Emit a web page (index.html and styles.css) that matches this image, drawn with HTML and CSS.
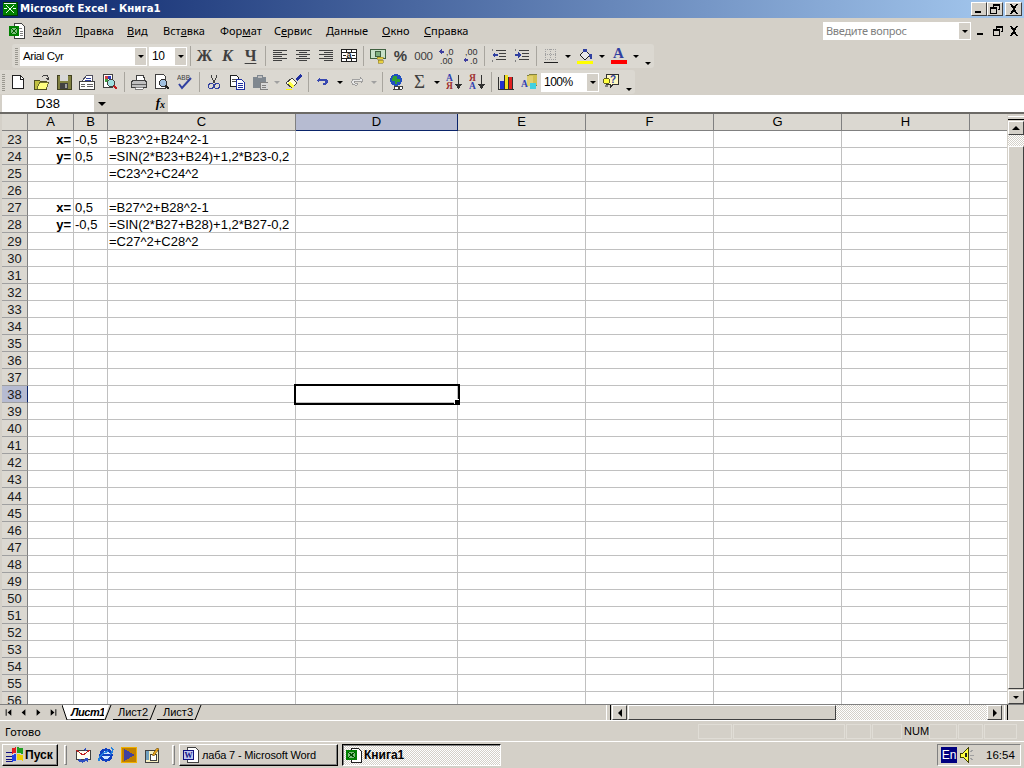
FILE: index.html
```html
<!DOCTYPE html>
<html lang="ru">
<head>
<meta charset="utf-8">
<title>Microsoft Excel - Книга1</title>
<link rel="stylesheet" href="styles.css">
</head>
<body>
<div class="app">
  <header class="titlebar">
    <svg class="i app-icon" viewBox="0 0 16 16"><rect x="0" y="0" width="16" height="15" fill="#004000"/><rect x="1" y="1" width="14" height="13" fill="#008000"/><path d="M3 3l9 9M12 3l-9 9M2 2h12M2 7h3M11 7h3" stroke="#fff" fill="none"/></svg>
    <span class="title-text">Microsoft Excel - Книга1</span>
    <div class="win-btns">
      <button class="wb"><svg class="g" viewBox="0 0 14 12"><rect x="3" y="8" width="6" height="2"/></svg></button>
      <button class="wb"><svg class="g" viewBox="0 0 14 12"><path d="M5 1h7v6h-2v-1h1v-3h-5v1h-1zM2 4h7v7h-7zM3 6v4h5v-4z" fill-rule="evenodd"/></svg></button>
      <button class="wb wb-close"><svg class="g" viewBox="0 0 14 12"><path d="M3 1h2l2 3 2-3h2l-3 5 3 5h-2l-2-3-2 3h-2l3-5z"/></svg></button>
    </div>
  </header>

  <nav class="menubar">
    <svg class="i menu-doc" viewBox="0 0 17 17"><path d="M6.500.5h7l3 3v12h-10z" fill="#fff" stroke="#404040"/><path d="M8.500 15.500h5" stroke="#404040"/><path d="M10 5h4M12 8h3M12 10h3M12 12h3" stroke="#808080"/><rect x="1" y="3" width="10" height="10" fill="#008000"/><rect x="3" y="5" width="6" height="6" fill="#80c080"/><path d="M3 5l6 6M9 5l-6 6" stroke="#006000"/></svg>
    <ul class="menu-list">
      <li><u>Ф</u>айл</li><li><u>П</u>равка</li><li><u>В</u>ид</li><li>Вст<u>а</u>вка</li><li>Фор<u>м</u>ат</li><li>С<u>е</u>рвис</li><li><u>Д</u>анные</li><li><u>О</u>кно</li><li><u>С</u>правка</li>
    </ul>
    <div class="ask">
      <span class="ask-input">Введите вопрос</span>
      <span class="drop"><b class="tri"></b></span>
    </div>
    <div class="doc-btns">
      <svg class="g" viewBox="0 0 14 12"><rect x="3" y="8" width="6" height="2"/></svg>
      <svg class="g" viewBox="0 0 14 12"><path d="M5 1h7v6h-2v-1h1v-3h-5v1h-1zM2 4h7v7h-7zM3 6v4h5v-4z" fill-rule="evenodd"/></svg>
      <svg class="g" viewBox="0 0 14 12"><path d="M3 1h2l2 3 2-3h2l-3 5 3 5h-2l-2-3-2 3h-2l3-5z"/></svg>
    </div>
  </nav>

  <div class="band band-format">
    <span class="grip"></span>
    <div class="combo combo-font"><span class="combo-text">Arial Cyr</span><span class="drop"><b class="tri"></b></span></div>
    <div class="combo combo-size"><span class="combo-text">10</span><span class="drop"><b class="tri"></b></span></div>
    <span class="sep"></span>
    <span class="tb tb-letter">Ж</span>
    <span class="tb tb-letter tb-italic">К</span>
    <span class="tb tb-letter tb-under">Ч</span>
    <span class="sep"></span>
    <span class="tb"><svg class="i" viewBox="0 0 16 16"><path d="M1 2.500h14M1 4.500h9M1 6.500h14M1 8.500h9M1 10.500h14M1 12.500h9" stroke="#404040"/></svg></span>
    <span class="tb"><svg class="i" viewBox="0 0 16 16"><path d="M1 2.500h14M4 4.500h8M1 6.500h14M4 8.500h8M1 10.500h14M4 12.500h8" stroke="#404040"/></svg></span>
    <span class="tb"><svg class="i" viewBox="0 0 16 16"><path d="M1 2.500h14M6 4.500h9M1 6.500h14M6 8.500h9M1 10.500h14M6 12.500h9" stroke="#404040"/></svg></span>
    <span class="tb"><svg class="i" viewBox="0 0 16 16"><rect x=".5" y="1.500" width="15" height="12" fill="#fff" stroke="#202020"/><path d="M1 4.500h14M1 10.500h14M5.500 2v2M10.500 2v2M5.500 11v2M10.500 11v2M2 7.500h3M11 7.500h3" stroke="#202020"/><text x="8" y="10" class="svg-mini">a</text></svg></span>
    <span class="sep"></span>
    <span class="tb"><svg class="i" viewBox="0 0 16 16"><rect x=".5" y="1.500" width="15" height="9" fill="#c8e0c8" stroke="#406040"/><circle cx="8" cy="6" r="3" fill="#80b080" stroke="#406040"/><path d="M7 9h6v2h-6zM8 12h5v3h-5z" fill="#e8d040" stroke="#807020" stroke-width=".5"/></svg></span>
    <span class="tb tb-text">%</span>
    <span class="tb tb-text tb-thin">000</span>
    <span class="tb"><svg class="i i-wide" viewBox="0 0 18 16"><path d="M4 1l-3 2.500 3 2.500zM4 2.500h2v2h-2z" fill="#4040a0"/><text x="8" y="7" class="svg-num">,0</text><text x="2" y="16" class="svg-num">,00</text></svg></span>
    <span class="tb"><svg class="i i-wide" viewBox="0 0 18 16"><text x="4" y="7" class="svg-num">,00</text><path d="M5 9.500l-3 2.500 3 2.500zM5 11h2v2h-2z" fill="#4040a0"/><text x="9" y="16" class="svg-num">,0</text></svg></span>
    <span class="sep"></span>
    <span class="tb"><svg class="i" viewBox="0 0 16 16"><path d="M5 2.500h10M8 5.500h7M8 8.500h7M5 11.500h10" stroke="#404040"/><path d="M1 7l3-3v2h3v2h-3v2z" fill="#3040a0"/><path d="M1 1v2M1 12v2" stroke="#808080"/></svg></span>
    <span class="tb"><svg class="i" viewBox="0 0 16 16"><path d="M5 2.500h10M8 5.500h7M8 8.500h7M5 11.500h10" stroke="#404040"/><path d="M7 7l-3-3v2h-3v2h3v2z" fill="#3040a0"/><path d="M1 1v2M1 12v2" stroke="#808080"/></svg></span>
    <span class="sep"></span>
    <span class="tb"><svg class="i" viewBox="0 0 16 16"><path d="M2.500 1v10M7.500 1v10M12.500 1v10M2 1.500h11M2 6.500h11M2 11.500h11" stroke="#a0a0a0" stroke-dasharray="1 1"/><path d="M1 14.500h14" stroke="#202020"/></svg></span>
    <span class="arr"><b class="tri"></b></span>
    <span class="tb"><svg class="i" viewBox="0 0 16 16"><path d="M3 7l5-5 5 5-5 5z" fill="#e8e8e8" stroke="#202020"/><path d="M6 1h4v3h-4z" fill="#3040a0"/><path d="M12 6h3v5h-2z" fill="#3040a0"/><rect x="0" y="13" width="16" height="3" fill="#ffff00"/></svg></span>
    <span class="arr"><b class="tri"></b></span>
    <span class="tb tb-fontcolor"><span class="fc-a">A</span><span class="fc-bar"></span></span>
    <span class="arr"><b class="tri"></b></span>
    <span class="more"><i class="more-line"></i><b class="tri"></b></span>
  </div>

  <div class="band band-std">
    <span class="grip grip-first"></span>
    <span class="tb"><svg class="i" viewBox="0 0 16 16"><path d="M2.500 1.500h8l3 3v10h-11z" fill="#fff" stroke="#202020"/><path d="M10.500 2v3h3" fill="none" stroke="#202020"/></svg></span>
    <span class="tb"><svg class="i" viewBox="0 0 16 16"><path d="M1 6h5l1 1h6v8h-12z" fill="#c0c040" stroke="#505020"/><path d="M4 14l3-6h9l-3 7h-9z" fill="#ffff80" stroke="#505020" stroke-width=".8"/><path d="M9 3l2-2h3l1 2v2M13 4h3l-1 2z" fill="none" stroke="#404040"/></svg></span>
    <span class="tb"><svg class="i" viewBox="0 0 16 16"><rect x="1" y="1" width="14" height="14" fill="#808040" stroke="#404020"/><rect x="4" y="1" width="8" height="6" fill="#d8d8d8"/><rect x="4" y="9" width="8" height="6" fill="#404040"/><rect x="9" y="10" width="2" height="4" fill="#a0a0a0"/></svg></span>
    <span class="tb"><svg class="i" viewBox="0 0 16 16"><path d="M3 7l5-6h5v6z" fill="#fff" stroke="#505060"/><path d="M7 4h5M6 6h6" stroke="#3040a0"/><rect x=".5" y="7.500" width="15" height="8" fill="#fff" stroke="#404040"/><path d="M2 10.500h4M2 12.500h4M8 10.500h6M8 12.500h6" stroke="#606060"/></svg></span>
    <span class="tb"><svg class="i" viewBox="0 0 16 16"><path d="M1.500 .5h9v13h-9z" fill="#fff" stroke="#404040"/><path d="M3 2h3v3h-3z" fill="#d04040"/><path d="M6 2h3v3h-3z" fill="#3040c0"/><path d="M3 5h3v3h-3z" fill="#40a040"/><circle cx="9" cy="9" r="3.500" fill="#a0e0e0" stroke="#404040"/><path d="M12 12l3 3" stroke="#c02020" stroke-width="2"/></svg></span>
    <span class="sep"></span>
    <span class="tb"><svg class="i" viewBox="0 0 16 16"><path d="M5 1h7l2 5h-9z" fill="#fff" stroke="#404040"/><path d="M1.500 6.500h13l1 2v5h-15v-5z" fill="#c0c0c0" stroke="#404040"/><path d="M1 10.500h14" stroke="#606060"/><path d="M4 13h8v2h-8z" fill="#fff" stroke="#404040" stroke-width=".6"/></svg></span>
    <span class="tb"><svg class="i" viewBox="0 0 16 16"><path d="M1.500 .5h8l2 2v12h-10z" fill="#fff" stroke="#404040"/><circle cx="9" cy="9" r="3.500" fill="#a0c0e0" stroke="#303030"/><path d="M12 12l3 3" stroke="#202020" stroke-width="2"/></svg></span>
    <span class="tb"><svg class="i" viewBox="0 0 16 16"><text x="0" y="6" class="svg-abv">ABB</text><path d="M2 10l3 4 9-10" fill="none" stroke="#3040a0" stroke-width="2" shape-rendering="auto"/></svg></span>
    <span class="sep"></span>
    <span class="tb"><svg class="i" viewBox="0 0 16 16"><path d="M5 1l3 8M11 1l-3 8" stroke="#404040" fill="none"/><circle cx="5" cy="12" r="2.500" fill="none" stroke="#3040a0"/><circle cx="11" cy="12" r="2.500" fill="none" stroke="#3040a0"/></svg></span>
    <span class="tb"><svg class="i" viewBox="0 0 16 16"><path d="M1.500 1.500h6l2 2v9h-8z" fill="#fff" stroke="#202020"/><path d="M3 5h4M3 7h4" stroke="#505050"/><path d="M7.500 5.500h5l3 3v7h-8z" fill="#fff" stroke="#2030a0"/><path d="M9 9h5M9 11h5M9 13h5" stroke="#2030a0"/></svg></span>
    <span class="tb"><svg class="i" viewBox="0 0 16 16"><path d="M5 1h6v2h3v11h-13v-11h4z" fill="#808890"/><path d="M6 2h4v2h-4z" fill="#c0c0c0"/><rect x="8" y="8" width="8" height="7" fill="#d8d8d8" stroke="#808080"/><path d="M10 11h4M10 13h4" stroke="#808080"/></svg></span>
    <span class="arr arr-off"><b class="tri"></b></span>
    <span class="tb"><svg class="i" viewBox="0 0 16 16"><path d="M0 9l6-5 5 5-5 5z" fill="#fffde0" stroke="#404040"/><path d="M2 9l4 5 2-2-4-5z" fill="#ffff40"/><path d="M9 5l5-5 2 2-5 5z" fill="#2030a0"/><path d="M0 15.500h6" stroke="#ffff00" stroke-width="1"/></svg></span>
    <span class="sep"></span>
    <span class="tb"><svg class="i" viewBox="0 0 16 16"><path d="M2 6l3-3v2h6c3 0 3 6-1 6h-2v-2h2c1 0 1-2 0-2h-6v2z" fill="#3848b0"/></svg></span>
    <span class="arr"><b class="tri"></b></span>
    <span class="tb"><svg class="i" viewBox="0 0 16 16"><path d="M14 6l-3-3v2h-6c-3 0-3 6 1 6h2v-2h-2c-1 0-1-2 0-2h6v2z" fill="#e8e8e8" stroke="#909090" stroke-width=".8"/></svg></span>
    <span class="arr arr-off"><b class="tri"></b></span>
    <span class="sep"></span>
    <span class="tb"><svg class="i" viewBox="0 0 16 16"><circle cx="7" cy="6" r="6" fill="#2050c0"/><path d="M4 2h4v3h3v3h-3v2h-2v-3h-3z" fill="#30a030"/><path d="M5 12a2 2 0 0 1 0 3h5a2 2 0 0 1 0-3zM10 12a2 2 0 0 1 0 3h3a2 2 0 0 0 0-3z" fill="#fff" stroke="#404040"/></svg></span>
    <span class="tb tb-sigma">Σ</span>
    <span class="arr"><b class="tri"></b></span>
    <span class="tb"><svg class="i" viewBox="0 0 16 16"><text x="0" y="7" class="svg-sort blue">A</text><text x="0" y="15" class="svg-sort red">Я</text><path d="M12 1v10" stroke="#303030"/><path d="M9 10h7l-3.500 5z" fill="#303030"/></svg></span>
    <span class="tb"><svg class="i" viewBox="0 0 16 16"><text x="0" y="7" class="svg-sort red">Я</text><text x="0" y="15" class="svg-sort blue">A</text><path d="M12 1v10" stroke="#303030"/><path d="M9 10h7l-3.500 5z" fill="#303030"/></svg></span>
    <span class="sep"></span>
    <span class="tb"><svg class="i" viewBox="0 0 16 16"><path d="M0 15.500h16M.5 3v13" stroke="#303030"/><rect x="2" y="7" width="4" height="8" fill="#2030d0"/><rect x="6" y="1" width="4" height="14" fill="#f0e020"/><rect x="10" y="3" width="4" height="12" fill="#e02020"/><path d="M6 1v14M10 3v12M14 3v12" stroke="#303030"/></svg></span>
    <span class="tb"><svg class="i" viewBox="0 0 16 16"><path d="M6 2l4-2h6v11l-4 2z" fill="#d0c050" stroke="#808040"/><path d="M6 2h6v10h-6z" fill="#e0d070"/><text x="0" y="13" class="svg-sort blue">A</text><circle cx="12" cy="12" r="3.500" fill="#40d0e0"/></svg></span>
    <div class="combo combo-zoom"><span class="combo-text">100%</span><span class="drop"><b class="tri"></b></span></div>
    <span class="tb"><svg class="i" viewBox="0 0 16 16"><path d="M3 .5h12v10h-5l-3 3v-3h-4z" fill="#fff8c0" stroke="#303030"/><text x="7" y="9" class="svg-help">?</text><circle cx="3.500" cy="7" r="3" fill="#ffff40" stroke="#606020"/><path d="M2 11h3v2h-3z" fill="#808080"/></svg></span>
    <span class="more"><i class="more-line"></i><b class="tri"></b></span>
  </div>

  <div class="formula">
    <div class="namebox">D38</div>
    <span class="name-arrow"><b class="tri"></b></span>
    <span class="fx">f<sub>x</sub></span>
    <div class="formula-input"></div>
  </div>

  <main class="sheet-area">
    <div class="grid-clip">
      <table class="grid">
        <colgroup><col class="c-h"><col class="c-a"><col class="c-b"><col class="c-c"><col class="c-d"><col class="c-x"><col class="c-x"><col class="c-x"><col class="c-x"><col class="c-x"></colgroup>
        <thead><tr><th></th><th>A</th><th>B</th><th>C</th><th class="sel">D</th><th>E</th><th>F</th><th>G</th><th>H</th><th></th></tr></thead>
        <tbody>
          <tr><th>23</th><td class="lbl">x=</td><td>-0,5</td><td>=B23^2+B24^2-1</td><td></td><td></td><td></td><td></td><td></td><td></td></tr>
          <tr><th>24</th><td class="lbl">y=</td><td>0,5</td><td>=SIN(2*B23+B24)+1,2*B23-0,2</td><td></td><td></td><td></td><td></td><td></td><td></td></tr>
          <tr><th>25</th><td></td><td></td><td>=C23^2+C24^2</td><td></td><td></td><td></td><td></td><td></td><td></td></tr>
          <tr><th>26</th><td></td><td></td><td></td><td></td><td></td><td></td><td></td><td></td><td></td></tr>
          <tr><th>27</th><td class="lbl">x=</td><td>0,5</td><td>=B27^2+B28^2-1</td><td></td><td></td><td></td><td></td><td></td><td></td></tr>
          <tr><th>28</th><td class="lbl">y=</td><td>-0,5</td><td>=SIN(2*B27+B28)+1,2*B27-0,2</td><td></td><td></td><td></td><td></td><td></td><td></td></tr>
          <tr><th>29</th><td></td><td></td><td>=C27^2+C28^2</td><td></td><td></td><td></td><td></td><td></td><td></td></tr>
          <tr><th>30</th><td></td><td></td><td></td><td></td><td></td><td></td><td></td><td></td><td></td></tr>
          <tr><th>31</th><td></td><td></td><td></td><td></td><td></td><td></td><td></td><td></td><td></td></tr>
          <tr><th>32</th><td></td><td></td><td></td><td></td><td></td><td></td><td></td><td></td><td></td></tr>
          <tr><th>33</th><td></td><td></td><td></td><td></td><td></td><td></td><td></td><td></td><td></td></tr>
          <tr><th>34</th><td></td><td></td><td></td><td></td><td></td><td></td><td></td><td></td><td></td></tr>
          <tr><th>35</th><td></td><td></td><td></td><td></td><td></td><td></td><td></td><td></td><td></td></tr>
          <tr><th>36</th><td></td><td></td><td></td><td></td><td></td><td></td><td></td><td></td><td></td></tr>
          <tr><th>37</th><td></td><td></td><td></td><td></td><td></td><td></td><td></td><td></td><td></td></tr>
          <tr><th class="sel">38</th><td></td><td></td><td></td><td class="active"></td><td></td><td></td><td></td><td></td><td></td></tr>
          <tr><th>39</th><td></td><td></td><td></td><td></td><td></td><td></td><td></td><td></td><td></td></tr>
          <tr><th>40</th><td></td><td></td><td></td><td></td><td></td><td></td><td></td><td></td><td></td></tr>
          <tr><th>41</th><td></td><td></td><td></td><td></td><td></td><td></td><td></td><td></td><td></td></tr>
          <tr><th>42</th><td></td><td></td><td></td><td></td><td></td><td></td><td></td><td></td><td></td></tr>
          <tr><th>43</th><td></td><td></td><td></td><td></td><td></td><td></td><td></td><td></td><td></td></tr>
          <tr><th>44</th><td></td><td></td><td></td><td></td><td></td><td></td><td></td><td></td><td></td></tr>
          <tr><th>45</th><td></td><td></td><td></td><td></td><td></td><td></td><td></td><td></td><td></td></tr>
          <tr><th>46</th><td></td><td></td><td></td><td></td><td></td><td></td><td></td><td></td><td></td></tr>
          <tr><th>47</th><td></td><td></td><td></td><td></td><td></td><td></td><td></td><td></td><td></td></tr>
          <tr><th>48</th><td></td><td></td><td></td><td></td><td></td><td></td><td></td><td></td><td></td></tr>
          <tr><th>49</th><td></td><td></td><td></td><td></td><td></td><td></td><td></td><td></td><td></td></tr>
          <tr><th>50</th><td></td><td></td><td></td><td></td><td></td><td></td><td></td><td></td><td></td></tr>
          <tr><th>51</th><td></td><td></td><td></td><td></td><td></td><td></td><td></td><td></td><td></td></tr>
          <tr><th>52</th><td></td><td></td><td></td><td></td><td></td><td></td><td></td><td></td><td></td></tr>
          <tr><th>53</th><td></td><td></td><td></td><td></td><td></td><td></td><td></td><td></td><td></td></tr>
          <tr><th>54</th><td></td><td></td><td></td><td></td><td></td><td></td><td></td><td></td><td></td></tr>
          <tr><th>55</th><td></td><td></td><td></td><td></td><td></td><td></td><td></td><td></td><td></td></tr>
          <tr><th>56</th><td></td><td></td><td></td><td></td><td></td><td></td><td></td><td></td><td></td></tr>
        </tbody>
      </table>
    </div>
    <aside class="vscroll">
      <span class="vs-stub"></span>
      <span class="sb-btn"><b class="tri tri-up"></b></span>
      <span class="vs-track"></span>
      <span class="vs-thumb"></span>
      <span class="sb-btn sb-down"><b class="tri"></b></span>
    </aside>
  </main>

  <div class="tabs-row">
    <div class="tab-nav">
      <svg class="nav" viewBox="0 0 16 15"><path d="M5 4h1v7h-1zM11 4v7l-4-3.500z"/></svg>
      <svg class="nav" viewBox="0 0 16 15"><path d="M10 4v7l-4-3.500z"/></svg>
      <svg class="nav" viewBox="0 0 16 15"><path d="M6 4v7l4-3.500z"/></svg>
      <svg class="nav" viewBox="0 0 16 15"><path d="M5 4v7l4-3.500zM10 4h1v7h-1z"/></svg>
    </div>
    <div class="tabs">
      <svg class="slant" viewBox="0 0 9 15"><polygon points="0,0 9,0 9,15 5,15" fill="#fff"/><path d="M0 0l5 15h4" fill="none" stroke="#000" shape-rendering="auto"/></svg>
      <span class="tab tab-active">Лист1</span>
      <svg class="slant" viewBox="0 0 9 15"><polygon points="0,0 5,0 0,15" fill="#fff"/><path d="M0 15h1l6-15" fill="none" stroke="#000" shape-rendering="auto"/></svg>
      <span class="tab">Лист2</span>
      <svg class="slant" viewBox="0 0 9 15"><path d="M0 15h2l6-15" fill="none" stroke="#000" shape-rendering="auto"/></svg>
      <span class="tab tab-3">Лист3</span>
      <svg class="slant" viewBox="0 0 9 15"><path d="M0 15h2l6-15" fill="none" stroke="#000" shape-rendering="auto"/></svg>
    </div>
    <div class="hscroll">
      <span class="hs-split"></span>
      <span class="sb-btn sb-h"><b class="tri tri-left"></b></span>
      <span class="hs-thumb"></span>
      <span class="hs-track"></span>
      <span class="sb-btn sb-h"><b class="tri tri-right"></b></span>
      <span class="hs-split hs-split-r"></span>
    </div>
  </div>

  <footer class="status">
    <span class="status-text">Готово</span>
    <div class="panels">
      <span class="panel p34"></span><span class="panel p112"></span><span class="panel p25"></span><span class="panel p30"></span><span class="panel p25">NUM</span><span class="panel p28"></span><span class="panel p25"></span><span class="panel p33"></span>
    </div>
  </footer>

  <div class="taskbar">
    <button class="start"><svg class="i i-start" viewBox="0 0 16 16"><path d="M0 6h6M0 9h6M0 12h6M0 14h5" stroke="#101080" stroke-width="1"/><path d="M5 2l4-1v5l-4 1z" fill="#e02020"/><path d="M10 1l5 1v5l-5-1z" fill="#20a020"/><path d="M5 8l4-1v6l-4 1z" fill="#2040e0"/><path d="M10 7l5 1v5l-5-1z" fill="#f0d000"/></svg><span>Пуск</span></button>
    <span class="tgrip"></span>
    <div class="quick">
      <svg class="i" viewBox="0 0 16 16"><path d="M1 3h14v9h-14z" fill="#fffff0" stroke="#404040"/><path d="M1 3l7 5 7-5" fill="none" stroke="#c02020"/><path d="M3 13a5 5 0 0 0 8 1l2 1v-4h-4l1 1a3 3 0 0 1-5-1z" fill="#3050c0"/><path d="M11 1l-3 1 3 2z" fill="#3050c0"/></svg>
      <svg class="i" viewBox="0 0 16 16"><circle cx="8" cy="8" r="5.500" fill="#d0e8ff" stroke="#1040c0" stroke-width="2.500"/><path d="M4 8h8" stroke="#1040c0" stroke-width="2"/><path d="M13 1c3 0 2 4-1 7M1 14c-1-3 3-8 9-10" fill="none" stroke="#2080e0" stroke-width="1.500"/></svg>
      <svg class="i" viewBox="0 0 16 16"><rect width="16" height="16" fill="#f0b000"/><rect x="1" y="1" width="14" height="14" fill="#c08000"/><path d="M3 2l11 6-11 6z" fill="#4040a0"/></svg>
      <svg class="i" viewBox="0 0 16 16"><rect x="1" y="3" width="13" height="12" fill="#f8f0c0" stroke="#404040"/><rect x="6" y="7" width="6" height="6" fill="#fff" stroke="#404040"/><path d="M8 8l5-7 2 1-5 7z" fill="#e0a020" stroke="#604000" stroke-width=".5"/><path d="M2 4h3v9h-3z" fill="#70a0c0"/></svg>
    </div>
    <span class="tgrip"></span>
    <button class="task"><svg class="i" viewBox="0 0 16 16"><path d="M4.500 .5h8l3 3v12h-11z" fill="#fff" stroke="#404040"/><rect x="0" y="3" width="11" height="10" fill="#101080"/><rect x="1" y="4" width="9" height="8" fill="#c0c8f0"/><text x="5.500" y="11" class="svg-w">W</text></svg><span>лаба 7 - Microsoft Word</span></button>
    <button class="task task-active"><svg class="i" viewBox="0 0 16 16"><path d="M5.500 1.500h7l3 3v11h-10z" fill="#fff" stroke="#202020"/><rect x="0" y="3" width="11" height="10" fill="#008000"/><rect x="2" y="5" width="7" height="6" fill="#80c080"/><path d="M2 5l7 6M9 5l-7 6" stroke="#005000"/></svg><span>Книга1</span></button>
    <div class="tray">
      <span class="lang">En</span>
      <svg class="i speaker" viewBox="0 0 16 16"><path d="M1 6h3l5-5v14l-5-5h-3z" fill="#ffff40" stroke="#404000"/><path d="M6 6h2v4h-2z" fill="#202020"/><path d="M11 5l3-2M11 8h4M11 11l3 2" stroke="#a0a0a0"/></svg>
      <span class="clock">16:54</span>
    </div>
  </div>
</div>
</body>
</html>
```

FILE: styles.css
```css
* { box-sizing: border-box; }
html, body { margin: 0; padding: 0; }
body { width: 1024px; height: 768px; overflow: hidden; background: #d4d0c8; font-family: "Noto Sans", "Liberation Sans", sans-serif; font-size: 11px; color: #000; }
.app { width: 1024px; height: 768px; display: flex; flex-direction: column; }
button { font: inherit; color: inherit; padding: 0; margin: 0; }
ul { list-style: none; margin: 0; padding: 0; }
.i { width: 16px; height: 16px; display: block; flex: none; shape-rendering: crispEdges; }
.i-wide { width: 18px; }
.i-start { width: 18px; height: 18px; }
.g { width: 14px; height: 12px; display: block; fill: #000; shape-rendering: crispEdges; }
.tri { display: block; width: 0; height: 0; border-style: solid; border-width: 3px 3.500px 0; border-color: #000 transparent transparent; }
.tri-up { border-width: 0 4px 4px; border-color: transparent transparent #000; }
.tri-left { border-width: 4px 4px 4px 0; border-color: transparent #000 transparent transparent; }
.tri-right { border-width: 4px 0 4px 4px; border-color: transparent transparent transparent #000; }

/* title */
.titlebar { height: 18px; flex: none; display: flex; align-items: center; background: linear-gradient(90deg, #0a246a, #a6caf0); color: #fff; padding: 0 2px 0 2px; }
.app-icon { width: 16px; height: 15px; }
.title-text { margin-left: 2px; font: bold 10.200px/18px "DejaVu Sans", sans-serif; }
.win-btns { margin-left: auto; display: flex; }
.wb { width: 16px; height: 14px; background: #d4d0c8; border: 1px solid; border-color: #fff #404040 #404040 #fff; display: flex; align-items: center; justify-content: center; }
.wb-close { margin-left: 2px; width: 17px; }

/* menu */
.menubar { height: 26px; flex: none; display: flex; align-items: center; padding-left: 8px; }
.menu-doc { width: 17px; height: 17px; margin-right: 8px; }
.menu-list { display: grid; grid-template-columns: 42px 52px 36px 57px 54px 52px 56px 42px 50px; line-height: 18px; }
.ask { margin-left: auto; width: 148px; height: 18px; display: flex; background: #fff; border: 1px solid #fff; }
.ask-input { flex: 1; color: #808080; font-size: 11px; letter-spacing: -.3px; line-height: 15px; padding-left: 2px; }
.drop { width: 11px; background: #d4d0c8; display: flex; align-items: center; justify-content: center; flex: none; }
.doc-btns { width: 53px; display: flex; justify-content: space-between; padding: 0 3px 0 3px; }

/* toolbars */
.band { height: 24px; flex: none; display: flex; align-items: center; background: #dbd8d1; border-radius: 3px; }
.band-format { width: 642px; margin-left: 12px; }
.band-std { width: 635px; margin-top: 2px; border-radius: 0 3px 3px 0; }
.grip { width: 8px; height: 17px; flex: none; background: repeating-linear-gradient(180deg, #9a9890 0 1px, transparent 1px 2px) 3px 0 / 3px 100% no-repeat; }
.grip-first { width: 6px; background-position: 2px 0; }
.combo { height: 19px; display: flex; background: #fff; border: 1px solid #fff; flex: none; }
.combo-font { width: 127px; }
.combo-size { width: 38px; margin-left: 2px; }
.combo-zoom { width: 58px; margin-left: 1px; }
.combo-text { flex: 1; font: 12px/17px "Liberation Sans", sans-serif; letter-spacing: -.5px; padding-left: 2px; overflow: hidden; white-space: nowrap; }
.combo-font .combo-text { font-size: 11.500px; letter-spacing: -.4px; }
.sep { width: 6px; height: 20px; flex: none; background: linear-gradient(#a8a59e, #a8a59e) center / 1px 100% no-repeat; }
.tb { width: 23px; height: 22px; flex: none; display: flex; align-items: center; justify-content: center; }
.tb-letter { font: bold 16px/22px "Liberation Serif", serif; color: #404040; }
.tb-italic { font-style: italic; }
.tb-under { text-decoration: underline; text-underline-offset: 2px; }
.tb-text { font: bold 15px/22px "Liberation Sans", sans-serif; color: #404040; }
.tb-thin { font: 11.500px/22px "Liberation Sans", sans-serif; letter-spacing: -.2px; }
.tb-sigma { font: 19px/22px "Liberation Serif", serif; color: #404040; }
.tb-fontcolor { flex-direction: column; justify-content: flex-end; padding-bottom: 3px; }
.fc-a { font: bold 15px/13px "Liberation Serif", serif; color: #3040a0; }
.fc-bar { width: 16px; height: 4px; background: #ff0000; }
.arr { width: 11px; flex: none; display: flex; justify-content: center; }
.arr-off .tri { border-top-color: #a0a0a0; }
.more { width: 13px; height: 20px; flex: none; display: flex; flex-direction: column; align-items: center; justify-content: flex-end; padding-bottom: 1px; gap: 1px; }
.more-line { display: none; }
.svg-mini { font: bold 9px "Liberation Sans", sans-serif; text-anchor: middle; fill: #202020; }
.svg-num { font: 9px "Liberation Sans", sans-serif; fill: #303030; }
.svg-abv { font: 6.500px "Liberation Sans", sans-serif; fill: #404040; }
.svg-sort { font: bold 9.500px "Liberation Serif", serif; }
.blue { fill: #3040b0; }
.red { fill: #a03030; }
.svg-help { font: bold 10px "Liberation Sans", sans-serif; fill: #3040a0; }
.svg-w { font: bold 8px "Liberation Serif", serif; text-anchor: middle; fill: #101080; }

/* formula */
.formula { height: 17px; flex: none; margin-top: 1px; display: flex; align-items: stretch; padding-left: 2px; }
.namebox { width: 92px; background: #fff; text-align: center; font: 13px/17px "Liberation Sans", sans-serif; }
.name-arrow { width: 16px; display: flex; align-items: center; justify-content: center; }
.name-arrow .tri { border-width: 4px 4px 0; }
.fx { width: 58px; text-align: right; padding-right: 3px; font: italic bold 13px/16px "Liberation Serif", serif; }
.fx sub { font-size: 10px; vertical-align: -1px; line-height: 0; }
.formula-input { flex: 1; background: #fff; }

/* sheet */
.sheet-area { height: 592px; flex: none; display: flex; border-top: 2px solid #6c6a66; }
.grid-clip { width: 1007px; height: 590px; overflow: hidden; padding-left: 2px; background: #fff; box-shadow: inset 2px 0 0 #d4d0c8, inset 1px 0 0 #6c6a66; }
.grid { table-layout: fixed; width: 1094px; border-collapse: separate; border-spacing: 0; font: 13px "Liberation Sans", sans-serif; }
.grid tr { height: 17px; }
.grid th, .grid td { height: 17px; padding: 0; border-right: 1px solid #c0c0c0; border-bottom: 1px solid #c0c0c0; line-height: 16px; white-space: nowrap; overflow: hidden; }
.grid tbody th, .grid tbody td { padding-top: 1px; line-height: 15px; vertical-align: top; }
.grid th { background: #dbd8d1; font-weight: normal; text-align: center; color: #000; border-right: 1px solid #808080; border-bottom: 1px solid #bdbab4; }
.grid tbody th { border-bottom-color: #a0a0a0; color: #1a1a1a; }
.grid thead th { border-bottom: 1px solid #808080; }
.grid th.sel { background: #b6bbd1; }
.grid thead th.sel { border-bottom-color: #0a246a; border-right-color: #0a246a; }
.grid tbody th.sel { border-right-color: #0a246a; }
.grid td { padding-left: 1px; overflow: visible; }
.grid td.lbl { font-weight: bold; text-align: right; padding-right: 2px; }
.c-h { width: 26px; } .c-a { width: 46px; } .c-b { width: 34px; } .c-c { width: 188px; } .c-d { width: 162px; } .c-x { width: 128px; }
.grid td.active { outline: 2px solid #000; position: relative; z-index: 1; }
.grid td.active::after { content: ""; position: absolute; right: -3px; bottom: -3px; width: 5px; height: 5px; background: #000; box-shadow: -1px -1px 0 #fff; }

.sb-btn { width: 16px; height: 14px; flex: none; background: #d4d0c8; border: 1px solid; border-color: #fff #404040 #404040 #fff; display: flex; align-items: center; justify-content: center; }
.vscroll { width: 17px; flex: none; display: flex; flex-direction: column; padding: 2px 0 0 1px; }
.vs-stub { height: 4px; flex: none; border-top: 1px solid #fff; border-bottom: 1px solid #000; margin-bottom: 1px; }
.vs-track { height: 11px; flex: none; background: repeating-conic-gradient(#d4d0c8 0 25%, #fff 0 50%) 0 0 / 2px 2px; }
.vs-thumb { flex: 1; background: #d4d0c8; border: 1px solid; border-color: #fff #404040 #404040 #fff; margin-bottom: 1px; }

/* tabs */
.tabs-row { height: 16px; flex: none; display: flex; border-top: 1px solid #808080; }
.tab-nav { width: 62px; display: flex; padding-left: 1px; flex: none; }
.nav { width: 15px; height: 15px; flex: none; }
.tabs { display: flex; width: 544px; flex: none; height: 15px; }
.slant { width: 9px; height: 15px; flex: none; display: block; }
.tab { height: 15px; font: 11px/14px "Liberation Sans", sans-serif; padding-left: 5px; border-bottom: 1px solid #000; width: 35px; white-space: nowrap; }
.tab-3 { width: 36px; padding-left: 6px; }
.tab-active { font: italic bold 11px/14px "Liberation Sans", sans-serif; letter-spacing: -.5px; background: #fff; width: 33px; padding-left: 0; }
.hscroll { flex: 1; display: flex; height: 15px; }
.hs-split { width: 5px; flex: none; border-left: 1px solid #fff; border-right: 1px solid #000; margin-right: 1px; }
.sb-h { width: 15px; height: 15px; }
.hs-thumb { width: 208px; flex: none; margin-left: 1px; background: #d4d0c8; border: 1px solid; border-color: #fff #404040 #404040 #fff; }
.hs-track { width: 151px; flex: none; background: repeating-conic-gradient(#d4d0c8 0 25%, #fff 0 50%) 0 0 / 2px 2px; }
.hs-split-r { width: 4px; margin: 0 0 0 2px; }

/* status */
.status { height: 22px; flex: none; display: flex; align-items: center; border-top: 1px solid #fff; border-bottom: 1px solid #fff; }
.status-text { font-size: 11px; padding-left: 5px; flex: none; width: 698px; }
.panels { display: flex; gap: 1px; height: 15px; }
.panel { height: 15px; border: 1px solid #e0ddd6; font: 11px/13px "Liberation Sans", sans-serif; text-align: center; display: block; }
.p34 { width: 34px; } .p112 { width: 112px; } .p25 { width: 25px; } .p30 { width: 30px; } .p28 { width: 28px; } .p33 { width: 33px; }
.panel:nth-child(5) { border-color: #d4d0c8; }

/* taskbar */
.taskbar { height: 26px; flex: none; display: flex; align-items: center; padding-left: 2px; }
.start { width: 56px; height: 22px; display: flex; align-items: center; gap: 1px; padding-left: 3px; background: #d4d0c8; border: 1px solid; border-color: #fff #000 #000 #fff; box-shadow: inset -1px -1px 0 #808080; font: bold 12px "Liberation Sans", sans-serif; flex: none; }
.tgrip { width: 3px; height: 20px; flex: none; margin: 0 4px 0 6px; border: 1px solid; border-color: #fff #808080 #808080 #fff; }
.quick { display: flex; gap: 7px; padding: 0 6px 0 4px; flex: none; }
.task { width: 159px; height: 22px; display: flex; align-items: center; gap: 3px; padding-left: 3px; background: #d4d0c8; border: 1px solid; border-color: #fff #000 #000 #fff; box-shadow: inset -1px -1px 0 #808080; font: 11px "Liberation Sans", sans-serif; letter-spacing: -.15px; flex: none; margin-right: 4px; }
.task-active { border-color: #000 #fff #fff #000; box-shadow: inset 1px 1px 0 #808080; background: repeating-conic-gradient(#d4d0c8 0 25%, #fff 0 50%) 0 0 / 2px 2px; font: bold 12px "Liberation Sans", sans-serif; letter-spacing: 0; gap: 2px; }
.tray { margin-left: auto; margin-right: 3px; width: 84px; height: 22px; display: flex; align-items: center; border: 1px solid; border-color: #808080 #fff #fff #808080; padding-left: 3px; }
.lang { width: 16px; height: 16px; background: #000080; color: #fff; font: 12px/16px "Liberation Sans", sans-serif; text-align: center; flex: none; }
.speaker { margin-left: 2px; }
.clock { margin-left: 11px; font: 11.500px "Liberation Sans", sans-serif; }
```
